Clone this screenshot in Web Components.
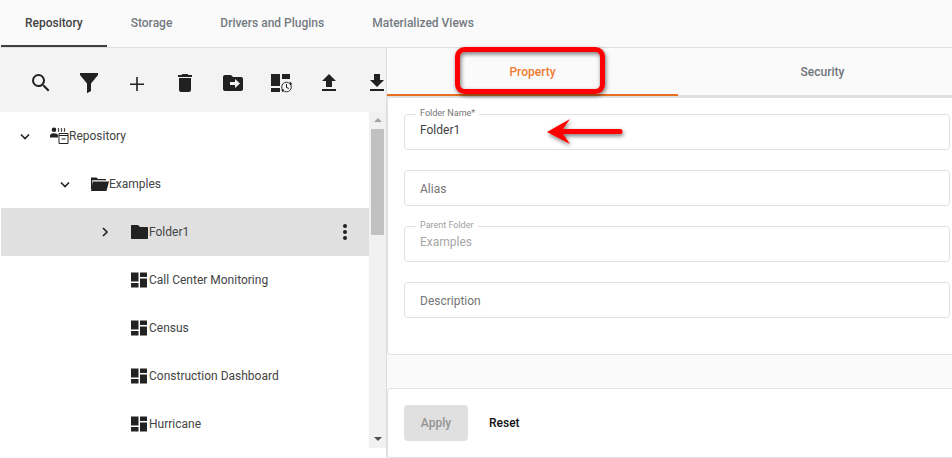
<!DOCTYPE html>
<html>
<head>
<meta charset="utf-8">
<title>Repository</title>
<style>
    html, body { margin: 0; background: #fff; height: 100%; overflow: hidden; }
    body { font-family: Roboto, "Liberation Sans", sans-serif; font-size: 12px; }
</style>
</head>
<body>
<portal-page>
    <top-tabs slot="tabs">
        <tab-item active>Repository</tab-item>
        <tab-item>Storage</tab-item>
        <tab-item>Drivers and Plugins</tab-item>
        <tab-item>Materialized Views</tab-item>
    </top-tabs>

    <repo-tree slot="left">
        <tree-row level="0" arrow="down" icon="repo">Repository</tree-row>
        <tree-row level="1" arrow="down" icon="open">Examples</tree-row>
        <tree-row level="2" arrow="right" icon="folder" selected>Folder1</tree-row>
        <tree-row level="2" icon="dash">Call Center Monitoring</tree-row>
        <tree-row level="2" icon="dash">Census</tree-row>
        <tree-row level="2" icon="dash">Construction Dashboard</tree-row>
        <tree-row level="2" icon="dash">Hurricane</tree-row>
    </repo-tree>

    <property-pane slot="right">
        <form-field label="Folder Name*" value="Folder1"></form-field>
        <form-field value="Alias" placeholder></form-field>
        <form-field label="Parent Folder" value="Examples" disabled></form-field>
        <form-field value="Description" placeholder></form-field>
    </property-pane>

    <call-outs slot="over"></call-outs>
</portal-page>

<script>
const pageTemplate = document.createElement("template");
pageTemplate.innerHTML = `
    <style>
        :host { display: block; width: 952px; height: 458px; position: relative; overflow: hidden; }
        .main { display: flex; height: 410px; }
        .left { flex: 0 0 386px; min-width: 0; }
        .right { flex: 1; min-width: 0; border-left: 1px solid #ddd; }
    </style>
    <slot name="tabs"></slot>
    <div class="main">
        <div class="left"><slot name="left"></slot></div>
        <div class="right"><slot name="right"></slot></div>
    </div>
    <slot name="over"></slot>`;

class PortalPage extends HTMLElement {
    constructor() {
        super();
        this.attachShadow({mode: "open"}).append(pageTemplate.content.cloneNode(true));
    }
}

const tabsTemplate = document.createElement("template");
tabsTemplate.innerHTML = `
    <style>
        :host {
            display: flex;
            height: 47px;
            padding-left: 1px;
            background: #fafafa;
            border-bottom: 1px solid #ddd;
            box-sizing: content-box;
        }
    </style>
    <slot></slot>`;

class TopTabs extends HTMLElement {
    constructor() {
        super();
        this.attachShadow({mode: "open"}).append(tabsTemplate.content.cloneNode(true));
    }
}

const tabItemTemplate = document.createElement("template");
tabItemTemplate.innerHTML = `
    <style>
        :host {
            display: flex;
            align-items: center;
            height: 45px;
            padding: 0 24px;
            font-weight: 500;
            color: #757b82;
            border-bottom: 2px solid transparent;
        }
        :host([active]) { color: #444; border-bottom-color: #3f3f3f; }
    </style>
    <slot></slot>`;

class TabItem extends HTMLElement {
    constructor() {
        super();
        this.attachShadow({mode: "open"}).append(tabItemTemplate.content.cloneNode(true));
    }
}

const treeTemplate = document.createElement("template");
treeTemplate.innerHTML = `
    <style>
        :host { display: block; height: 410px; background: #fff; }
        .toolbar {
            display: flex;
            height: 41px;
            padding: 23px 0 0 17px;
            background: #f3f3f3;
            overflow: hidden;
        }
        .toolbar span { flex: 0 0 48px; display: flex; justify-content: center; }
        .toolbar svg { width: 24px; height: 24px; fill: #212121; flex: none; }
        .body { display: flex; height: 336px; padding-left: 1px; }
        .rows { flex: 1; min-width: 0; }
        .scroll { flex: 0 0 17px; display: flex; flex-direction: column; background: #f1f1f1; align-items: center; }
        .arrow { width: 0; height: 0; border-left: 4px solid transparent; border-right: 4px solid transparent; }
        .up { border-bottom: 4px solid #a3a3a3; margin-top: 6px; }
        .thumb { width: 13px; height: 106px; background: #c1c1c1; margin-top: 7px; }
        .down { border-top: 4px solid #505050; margin-top: auto; margin-bottom: 7px; }
    </style>
    <div class="toolbar">
        <span><svg viewBox="0 0 24 24"><path d="M15.5 14h-.79l-.28-.27A6.47 6.47 0 0 0 16 9.5 6.5 6.5 0 1 0 9.5 16c1.61 0 3.09-.59 4.23-1.57l.27.28v.79l5 4.99L20.49 19l-4.99-5zm-6 0C7.01 14 5 11.99 5 9.5S7.01 5 9.5 5 14 7.01 14 9.5 11.99 14 9.5 14z"/></svg></span>
        <span><svg viewBox="0 0 24 24"><path d="M3 2h18v2l-7 8.5V20l-4 2.2V12.500L3 4z"/></svg></span>
        <span><svg viewBox="0 0 24 24"><path d="M5 12.500h6.200V6h1.600v6.500H19v1.500h-6.200v6h-1.600v-6H5z"/></svg></span>
        <span><svg viewBox="0 0 24 24"><path d="M6 19c0 1.100.9 2 2 2h8c1.100 0 2-.9 2-2V7H6v12zM19 4h-3.500l-1-1h-5l-1 1H5v2h14V4z"/></svg></span>
        <span><svg viewBox="0 0 24 24"><path d="M20 6h-8l-2-2H4c-1.100 0-2 .9-2 2v12c0 1.100.9 2 2 2h16c1.100 0 2-.9 2-2V8c0-1.100-.9-2-2-2zm-6 11v-3H9v-3h5V8l5 4.500-5 4.500z"/></svg></span>
        <span><svg viewBox="0 0 24 24"><path d="M2 3h9v12H2zM2 17h9v4H2zM13 3h8v5h-8z"/><circle cx="17.500" cy="16" r="4.800" fill="#f3f3f3" stroke="#333" stroke-width="1"/><path d="M17 13h1v3l2 1.200-.5.800-2.500-1.500z"/><path d="M21 10.500l2.500 3h-3zM14 21.500l-2-3h3z"/></svg></span>
        <span><svg viewBox="0 0 24 24"><path d="M9 16h6v-6h4l-7-7-7 7h4zm-4 2h14v2H5z"/></svg></span>
        <span><svg viewBox="0 0 24 24"><path d="M19 9h-4V3H9v6H5l7 7 7-7zM5 18v2h14v-2H5z"/></svg></span>
    </div>
    <div class="body">
        <div class="rows"><slot></slot></div>
        <div class="scroll">
            <div class="arrow up"></div>
            <div class="thumb"></div>
            <div class="arrow down"></div>
        </div>
    </div>`;

class RepoTree extends HTMLElement {
    constructor() {
        super();
        this.attachShadow({mode: "open"}).append(treeTemplate.content.cloneNode(true));
    }
}

const treeIcons = {
    repo: `<svg viewBox="0 0 20 20" width="20" height="20"><circle cx="5" cy="3.800" r="2.300"/><path d="M1 11.500V9.800C1 8 3 7.300 5 7.300s4 .7 4 2.500v1.700z"/><path d="M9 2c1 1 1 3 0 4M12 2c1 1 1 3 0 4M15 2c1 1 1 3 0 4" fill="none" stroke="#222" stroke-width="1"/><path d="M10 7.500h9v10h-9z" fill="#fff" stroke="#222" stroke-width="1"/><path d="M10 9.500h9M12.500 13h4" stroke="#222" stroke-width="1"/></svg>`,
    open: `<svg viewBox="0 0 20 20" width="20" height="20"><path d="M2 3.500h5.500l1.500 1.500h8v1.300H3.200V15H2z"/><path d="M3.800 7.500H20L17.500 17H2z"/></svg>`,
    folder: `<svg viewBox="0 0 20 20" width="20" height="20"><path d="M3 3h6l2 2h7c.6 0 1 .4 1 1v10c0 .6-.4 1-1 1H3c-.6 0-1-.4-1-1V4c0-.6.4-1 1-1z"/></svg>`,
    dash: `<svg viewBox="0 0 20 20" width="20" height="20"><path d="M2 2.500h7.500v9H2zM2 13h7.500v4.500H2zM11 2.500h7v4.500h-7zM11 8.500h7v9h-7z"/></svg>`
};

const rowTemplate = document.createElement("template");
rowTemplate.innerHTML = `
    <style>
        :host { display: flex; align-items: center; height: 48px; color: #444; line-height: 16px; }
        :host([selected]) { background: #e0e0e0; }
        .chev { flex: 0 0 24px; height: 24px; }
        .chev svg { display: block; fill: none; stroke: #222; stroke-width: 1.600; }
        .icon { flex: 0 0 20px; height: 20px; margin-left: 12px; fill: #222; }
        .icon svg { display: block; }
        .label { flex: 1; margin-top: -1px; white-space: nowrap; }
        .more { display: none; flex: 0 0 4px; margin-right: 22px; flex-direction: column; gap: 2px; }
        .more i { display: block; width: 4px; height: 4px; border-radius: 50%; background: #222; }
        :host([selected]) .more { display: flex; }
    </style>
    <span class="chev"></span>
    <span class="icon"></span>
    <span class="label"><slot></slot></span>
    <span class="more"><i></i><i></i><i></i></span>`;

class TreeRow extends HTMLElement {
    constructor() {
        super();
        const shadow = this.attachShadow({mode: "open"});
        shadow.append(rowTemplate.content.cloneNode(true));
        this.style.paddingLeft = (12 + 40 * Number(this.getAttribute("level"))) + "px";
        const arrow = this.getAttribute("arrow");
        if (arrow === "down") shadow.querySelector(".chev").innerHTML = `<svg viewBox="0 0 24 24" width="24" height="24"><path d="M8 10.500l4 4 4-4"/></svg>`;
        if (arrow === "right") shadow.querySelector(".chev").innerHTML = `<svg viewBox="0 0 24 24" width="24" height="24"><path d="M10 8l4 4-4 4"/></svg>`;
        shadow.querySelector(".icon").innerHTML = treeIcons[this.getAttribute("icon")];
    }
}

const paneTemplate = document.createElement("template");
paneTemplate.innerHTML = `
    <style>
        :host { display: block; height: 410px; background: #fafafa; overflow: hidden; }
        .tabs { display: flex; width: 582px; height: 47px; border-bottom: 2px solid #ddd; box-sizing: content-box; }
        .tab { flex: 0 0 289px; height: 47px; box-sizing: border-box; display: flex; align-items: center; justify-content: center; font-weight: 500; color: #6f757c; }
        .tab.on { flex-basis: 291px; color: #ee7b30; height: 48px; border-bottom: 2px solid #e9701f; padding-top: 1px; }
        .card {
            background: #fff;
            border: 1px solid #e2e2e2;
            border-right: 0;
            border-radius: 4px 0 0 4px;
        }
        .form { height: 240px; padding: 16px 2px 0 16px; display: flex; flex-direction: column; gap: 20px; }
        .foot { margin-top: 33px; height: 68px; display: flex; align-items: center; padding-left: 16px; gap: 21px; }
        .btn { width: 64px; height: 36px; display: flex; align-items: center; justify-content: center; border-radius: 4px; background: #e0e0e0; color: #949494; font-weight: 500; }
        .link { color: #111; font-weight: 500; }
    </style>
    <div class="tabs">
        <div class="tab on">Property</div>
        <div class="tab">Security</div>
    </div>
    <div class="card form"><slot></slot></div>
    <div class="card foot">
        <div class="btn">Apply</div>
        <div class="link">Reset</div>
    </div>`;

class PropertyPane extends HTMLElement {
    constructor() {
        super();
        this.attachShadow({mode: "open"}).append(paneTemplate.content.cloneNode(true));
    }
}

const fieldTemplate = document.createElement("template");
fieldTemplate.innerHTML = `
    <style>
        :host {
            display: flex;
            align-items: center;
            position: relative;
            height: 36px;
            box-sizing: border-box;
            padding: 0 15px;
            border: 1px solid #e0e0e0;
            border-radius: 4px;
            color: #424242;
        }
        :host([placeholder]) { color: #757575; }
        :host([disabled]) { color: #a6a6a6; }
        .legend {
            position: absolute;
            left: 11px;
            top: -7px;
            padding: 0 4px;
            background: #fff;
            font-size: 9px;
            line-height: 11px;
            color: #757575;
            white-space: nowrap;
        }
        :host([disabled]) .legend { color: #a0a0a0; }
        .value { line-height: 16px; }
        :host([label]) .value { margin-top: -4px; }
        :host([placeholder]) .value { margin-top: 2px; }
    </style>
    <span class="legend"></span>
    <span class="value"></span>`;

class FormField extends HTMLElement {
    constructor() {
        super();
        const shadow = this.attachShadow({mode: "open"});
        shadow.append(fieldTemplate.content.cloneNode(true));
        const legend = shadow.querySelector(".legend");
        if (this.hasAttribute("label")) legend.textContent = this.getAttribute("label");
        else legend.remove();
        shadow.querySelector(".value").textContent = this.getAttribute("value");
    }
}

const calloutTemplate = document.createElement("template");
calloutTemplate.innerHTML = `
    <style>
        :host { position: absolute; inset: 0; pointer-events: none; display: block; }
        svg { display: block; }
    </style>
    <svg width="952" height="458" viewBox="0 0 952 458">
        <defs>
            <filter id="shade" x="-20%" y="-30%" width="140%" height="170%">
                <feDropShadow dx="1" dy="2" stdDeviation="2" flood-color="#000" flood-opacity="0.55"/>
            </filter>
        </defs>
        <rect x="457.500" y="49.500" width="145" height="42" rx="7" fill="none" stroke="#fe0000" stroke-width="5" filter="url(#shade)"/>
        <path d="M547 132L570 119L563 129H620a2.500 2.500 0 0 1 0 5H563L570 144z" fill="#fe0000" filter="url(#shade)"/>
    </svg>`;

class CallOuts extends HTMLElement {
    constructor() {
        super();
        this.attachShadow({mode: "open"}).append(calloutTemplate.content.cloneNode(true));
    }
}

customElements.define("portal-page", PortalPage);
customElements.define("top-tabs", TopTabs);
customElements.define("tab-item", TabItem);
customElements.define("repo-tree", RepoTree);
customElements.define("tree-row", TreeRow);
customElements.define("property-pane", PropertyPane);
customElements.define("form-field", FormField);
customElements.define("call-outs", CallOuts);
</script>
</body>
</html>
